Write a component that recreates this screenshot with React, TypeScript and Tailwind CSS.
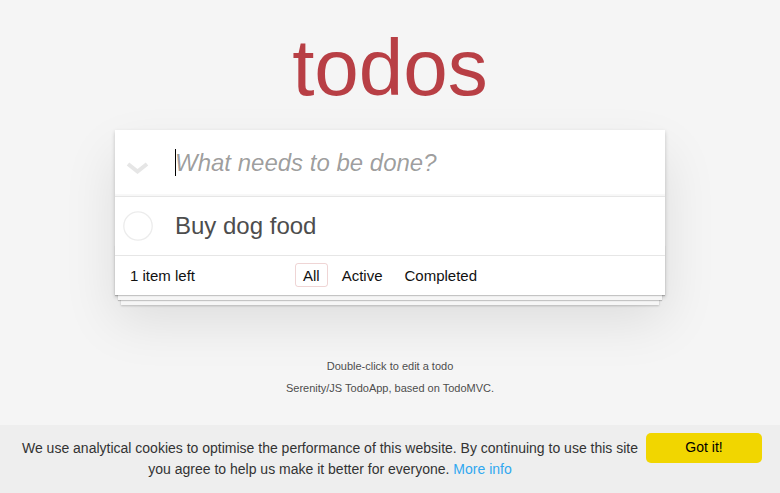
import React from "react";

const filters = ["All", "Active", "Completed"];

export default function App() {
  return (
    <div className="min-h-[493px] bg-[#f5f5f5] text-[14px] leading-[1.4] text-[#111111] font-['Liberation_Sans',Arial,sans-serif]">
      <div className="mx-auto w-[550px]">
        {/* title */}
        <div className="h-[130px] pt-[28px]">
          <h1 className="text-center text-[80px] leading-[80px] font-extralight text-[#b83f45]">
            todos
          </h1>
        </div>

        {/* card */}
        <section className="bg-white shadow-[0_2px_4px_0_rgba(0,0,0,0.2),0_25px_50px_0_rgba(0,0,0,0.1)]">
          <header className="flex h-[66px] shadow-[inset_0_-2px_1px_rgba(0,0,0,0.03)]">
            <div className="w-[60px] shrink-0 pl-[11px] pt-[32px]">
              <svg width="23" height="12" viewBox="0 0 23 12">
                <polyline
                  points="2,2 11.5,9.5 21,2"
                  fill="none"
                  stroke="#e6e6e6"
                  strokeWidth="4"
                  strokeLinejoin="miter"
                />
              </svg>
            </div>
            <div className="relative h-[65px] flex-1">
              <input
                className="h-full w-full bg-transparent pr-4 text-[24px] leading-[1.4] italic outline-none placeholder:text-[rgba(0,0,0,0.4)]"
                placeholder="What needs to be done?"
              />
              <span className="absolute left-0 top-[19px] h-[27px] w-px bg-black" />
            </div>
          </header>

          <ul className="border-t border-[#e6e6e6]">
            <li className="flex h-[58px]">
              <div className="flex w-[60px] shrink-0 items-center pl-[8px]">
                <svg width="30" height="30" viewBox="0 0 30 30">
                  <circle cx="15" cy="15" r="14.2" fill="none" stroke="#ececec" strokeWidth="1.3" />
                </svg>
              </div>
              <label className="block py-[15px] pr-[15px] text-[24px] leading-[28px] text-[#4d4d4d]">
                Buy dog food
              </label>
            </li>
          </ul>

          <footer className="relative h-[40px] border-t border-[#e6e6e6] px-[15px] pt-[10px] text-[15px]">
            <div className="absolute inset-x-0 bottom-0 h-[50px] overflow-hidden shadow-[0_1px_1px_rgba(0,0,0,0.2),0_8px_0_-3px_#f6f6f6,0_9px_1px_-3px_rgba(0,0,0,0.2),0_16px_0_-6px_#f6f6f6,0_17px_2px_-6px_rgba(0,0,0,0.2)]" />
            <div className="relative grid h-[20px] grid-cols-[1fr_auto_1fr] items-start">
              <span className="leading-[20px]">1 item left</span>
              <ul className="-mt-[3px] flex gap-[6px]">
                {filters.map((f) => (
                  <li key={f}>
                    <a
                      className={
                        f === "All"
                          ? "block rounded-[3px] border border-[rgba(175,47,47,0.2)] px-[7px] pt-[3px] pb-[1px] leading-[18px]"
                          : "block rounded-[3px] border border-transparent px-[7px] pt-[3px] pb-[1px] leading-[18px]"
                      }
                    >
                      {f}
                    </a>
                  </li>
                ))}
              </ul>
              <span />
            </div>
          </footer>
        </section>

        {/* info */}
        <footer className="mt-[66px] flex flex-col gap-[11px] text-center text-[11px] leading-none text-[#4d4d4d] [text-shadow:0_1px_0_rgba(255,255,255,0.5)]">
          <p>Double-click to edit a todo</p>
          <p>Serenity/JS TodoApp, based on TodoMVC.</p>
        </footer>
      </div>

      {/* cookie banner */}
      <div className="fixed inset-x-0 bottom-0 flex h-[68px] items-start gap-[4px] bg-[#eeeeee] pl-[18px] pr-[18px] pt-[8px] font-['Liberation_Sans',Arial,sans-serif]">
        <p className="mt-[4.5px] flex-1 text-center text-[14px] leading-[21px] text-[#333333]">
          We use analytical cookies to optimise the performance of this website. By continuing to use
          this site you agree to help us make it better for everyone.{" "}
          <a className="text-[#31a8f0]">More info</a>
        </p>
        <button className="h-[30px] w-[116px] shrink-0 rounded-[5px] bg-[#f1d600] text-[14px] text-black">
          Got it!
        </button>
      </div>
    </div>
  );
}
